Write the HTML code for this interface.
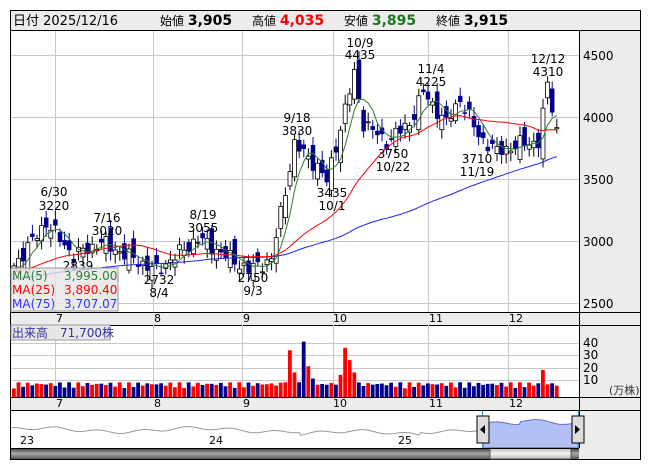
<!DOCTYPE html>
<html><head><meta charset="utf-8">
<style>
html,body{margin:0;padding:0;background:#fff;width:653px;height:470px;overflow:hidden}
body{font-family:"DejaVu Sans","Noto Sans CJK JP",sans-serif}
svg text{font-family:"DejaVu Sans","Noto Sans CJK JP",sans-serif}
</style></head><body>
<svg id="s" width="653" height="470" xmlns="http://www.w3.org/2000/svg">
<rect x="10.5" y="10.5" width="630" height="449" fill="#fff" stroke="#000"/>
<rect x="11" y="11" width="629" height="19" fill="#ececec"/>
<line x1="10" y1="30.5" x2="641" y2="30.5" stroke="#000"/>
<text x="13" y="25" font-size="13" fill="#000">日付 2025/12/16</text>
<text x="160" y="25" font-size="12">始値 <tspan font-size="14" font-weight="bold">3,905</tspan></text>
<text x="252" y="25" font-size="12">高値 <tspan font-size="14" font-weight="bold" fill="#f00">4,035</tspan></text>
<text x="344" y="25" font-size="12">安値 <tspan font-size="14" font-weight="bold" fill="#1a7a1a">3,895</tspan></text>
<text x="436" y="25" font-size="12">終値 <tspan font-size="14" font-weight="bold">3,915</tspan></text>
<rect x="579" y="31" width="61" height="428" fill="#ececec"/>
<line x1="579.5" y1="30" x2="579.5" y2="448" stroke="#000"/>
<rect x="11" y="312" width="568" height="13" fill="#ececec"/>
<rect x="11" y="397" width="568" height="13" fill="#ececec"/>
<line x1="10" y1="312.5" x2="641" y2="312.5" stroke="#000"/>
<line x1="10" y1="325.5" x2="641" y2="325.5" stroke="#000"/>
<line x1="10" y1="397.5" x2="641" y2="397.5" stroke="#000"/>
<line x1="10" y1="410.5" x2="641" y2="410.5" stroke="#000"/>
<g id="grid" stroke="#c8c8c8" stroke-width="1"></g>
<g font-size="12" fill="#000">
<text x="583" y="60">4500</text><text x="583" y="122">4000</text><text x="583" y="184">3500</text><text x="583" y="246">3000</text><text x="583" y="308">2500</text>
<text x="583" y="347">40</text><text x="583" y="359">30</text><text x="583" y="372">20</text><text x="583" y="384">10</text>
<text x="609" y="394" font-size="11" fill="#333">(万株)</text>
</g>
<g id="mon" font-size="11" fill="#000"></g>
<g id="vol"></g>
<g id="cand"></g>
<g id="ma"></g>
<g font-size="12" fill="#000" text-anchor="middle">
<text x="54" y="196">6/30</text><text x="54" y="210">3220</text>
<text x="78" y="270">2839</text>
<text x="107" y="222">7/16</text><text x="107" y="235">3020</text>
<text x="203" y="219">8/19</text><text x="203" y="232">3055</text>
<text x="159" y="284">2732</text><text x="159" y="297">8/4</text>
<text x="253" y="282">2750</text><text x="253" y="295">9/3</text>
<text x="297" y="122">9/18</text><text x="297" y="135">3830</text>
<text x="332" y="197">3435</text><text x="332" y="210">10/1</text>
<text x="360" y="47">10/9</text><text x="360" y="59">4435</text>
<text x="393" y="158">3750</text><text x="393" y="171">10/22</text>
<text x="431" y="73">11/4</text><text x="431" y="86">4225</text>
<text x="477" y="163">3710</text><text x="477" y="176">11/19</text>
<text x="548" y="63">12/12</text><text x="548" y="76">4310</text>
</g>
<rect x="11" y="268" width="107" height="43" fill="#e6e6e6" fill-opacity="0.8" stroke="#999"/>
<g font-size="12">
<text x="12" y="280" fill="#2e7d32">MA(5)</text><text x="64" y="280" fill="#2e7d32">3,995.00</text>
<text x="12" y="294" fill="#f00">MA(25)</text><text x="64" y="294" fill="#f00">3,890.40</text>
<text x="12" y="308" fill="#3333ff">MA(75)</text><text x="64" y="308" fill="#3333ff">3,707.07</text>
</g>
<rect x="11" y="325" width="99" height="15" fill="#e6e6e6" stroke="#999"/>
<text x="12" y="337" font-size="12" fill="#333399">出来高　71,700株</text>
<path id="nav" fill="none" stroke="#999"/>
<path id="navsel" fill="#b3c0f5" stroke="#6a6ad0"/>
<g font-size="11"><text x="20" y="444">23</text><text x="209" y="444">24</text><text x="398" y="444">25</text></g>
<line x1="482.5" y1="411" x2="482.5" y2="448" stroke="#39c"/>
<line x1="578.5" y1="411" x2="578.5" y2="448" stroke="#39c"/>
<rect x="477" y="416" width="12" height="27" fill="#ddd" stroke="#000"/>
<path d="M480 429.5 L485 425 L485 434Z" fill="#000"/>
<rect x="572" y="416" width="12" height="27" fill="#ddd" stroke="#000"/>
<path d="M580 429.5 L575 425 L575 434Z" fill="#000"/>
<defs><linearGradient id="g" x1="0" y1="0" x2="0" y2="1"><stop offset="0" stop-color="#333"/><stop offset="0.5" stop-color="#aaa"/><stop offset="1" stop-color="#555"/></linearGradient>
<linearGradient id="g2" x1="0" y1="0" x2="0" y2="1"><stop offset="0" stop-color="#bbb"/><stop offset="0.5" stop-color="#f4f4f4"/><stop offset="1" stop-color="#bbb"/></linearGradient></defs>
<rect x="11" y="448" width="568" height="11" fill="url(#g)"/>
<rect x="490" y="448" width="81" height="11" fill="url(#g2)" stroke="#555"/>
<line x1="10" y1="448.5" x2="579" y2="448.5" stroke="#000"/>
</svg>
<script>
const NS="http://www.w3.org/2000/svg";
function el(p,t,a){const e=document.createElementNS(NS,t);for(const k in a)e.setAttribute(k,a[k]);document.getElementById(p).appendChild(e);return e;}
[55,153,242,333,428,508].forEach(x=>{el('grid','line',{x1:x+.5,y1:31,x2:x+.5,y2:312});el('grid','line',{x1:x+.5,y1:325,x2:x+.5,y2:397});});
[55,117,179,241,303].forEach(y=>el('grid','line',{x1:11,y1:y+.5,x2:579,y2:y+.5}));
[343,355,368,380].forEach(y=>el('grid','line',{x1:11,y1:y+.5,x2:579,y2:y+.5}));
[[59,'7'],[157,'8'],[246,'9'],[336,'10'],[432,'11'],[512,'12']].forEach(([x,t])=>{
 let a=el('mon','text',{x:x-3,y:322});a.textContent=t;let b=el('mon','text',{x:x-3,y:407});b.textContent=t;});
const A=[[0,2800],[7,3150],[13,2880],[19,2990],[31,2760],[40,3020],[51,2770],[56,2850],[61,3780],[66,3600],[68,3480],[74,4350],[76,3950],[81,3800],[86,3950],[89,4200],[94,3950],[97,4150],[101,3850],[105,3720],[110,3780],[114,3800],[116,4250],[118,3915]];
const N=119;let C=[];
for(let i=0;i<N;i++){let j=0;while(j<A.length-2&&A[j+1][0]<=i)j++;const [i0,p0]=A[j],[i1,p1]=A[j+1];let p=p0+(p1-p0)*(i-i0)/(i1-i0);p+=Math.sin(i*2.3)*45+Math.sin(i*5.1)*25;C.push(p);}
C[N-1]=3915;
const Y=p=>117-(p-4000)*0.124, X=i=>14+i*4.6;
let prev=2780;
for(let i=0;i<N;i++){const c=C[i];const o=i==N-1?3905:prev+Math.sin(i*3.7)*90;const h=Math.max(o,c)+25+Math.abs(Math.sin(i*1.9))*50,l=Math.min(o,c)-25-Math.abs(Math.cos(i*2.7))*50;
 const x=X(i);el('cand','line',{x1:x,y1:Y(h),x2:x,y2:Y(l),stroke:c>=o?'#000':'#00008b'});
 const up=c>=o;el('cand','rect',{x:x-2,y:Y(Math.max(o,c)),width:4,height:Math.max(1,Math.abs(Y(o)-Y(c))),fill:up?'#fff':'#00008b',stroke:up?'#000':'#00008b','stroke-width':up?0.8:0.5});
 prev=c;
 let v=7+Math.abs(Math.sin(i*1.7))*5;if(i>=59&&i<=66)v=[12,38,20,12,45,25,15,10][i-59];if(i>=70&&i<=74)v=[10,18,40,30,20][i-70];if(i==115)v=22;
 el('vol','rect',{x:x-2,y:397-v*1.23,width:3.8,height:v*1.23,fill:up?'#f00':'#00008b'});}
let H=[];for(let k=0;k<75;k++)H.push(2600+k*2.5+Math.sin(k)*40);const all=H.concat(C);
function ma(n,col){let d='';for(let i=0;i<N;i++){let s=0;for(let k=0;k<n;k++)s+=all[75+i-k];const p=s/n;d+=(i?'L':'M')+X(i).toFixed(1)+' '+Y(p).toFixed(1);}el('ma','path',{d:d,fill:'none',stroke:col,'stroke-width':1});}
ma(75,'#2222ee');ma(25,'#f00');ma(5,'#2e7d32');
let d='',ds='';const nx0=11,nx1=579;for(let x=nx0;x<=nx1;x+=2){const y=430-Math.sin(x/25)*2-Math.sin(x/7)*1.5-(x>300&&x<420?-3:0);if(x<483)d+=(d?'L':'M')+x+' '+y.toFixed(1);else ds+=(ds?'L':'M')+x+' '+(y-5-(x>520?3:0)).toFixed(1);}
document.getElementById('nav').setAttribute('d',d);
document.getElementById('navsel').setAttribute('d','M483 448 '+ds.replace('M','L')+' L578 448Z');
</script>
</body></html>
